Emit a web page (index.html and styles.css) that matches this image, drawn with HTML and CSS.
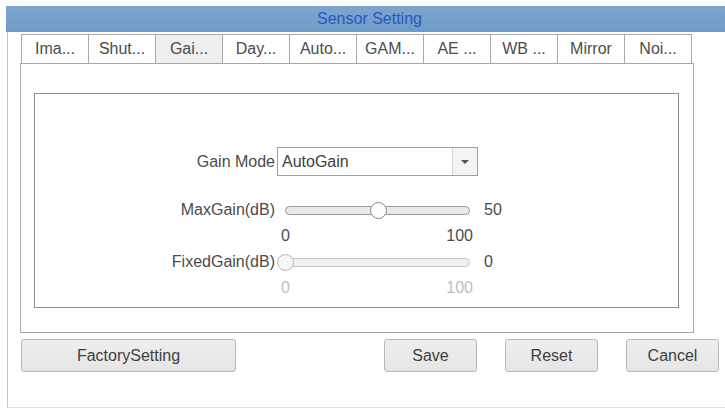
FILE: index.html
```html
<!DOCTYPE html>
<html lang="en">
<head>
<meta charset="utf-8">
<title>Sensor Setting</title>
<link rel="stylesheet" href="styles.css">
</head>
<body>
<div class="window">
  <div class="titlebar"><span class="title">Sensor Setting</span></div>
  <div class="frame">
    <div class="tabs">
      <div class="tab">Ima...</div>
      <div class="tab">Shut...</div>
      <div class="tab active">Gai...</div>
      <div class="tab">Day...</div>
      <div class="tab">Auto...</div>
      <div class="tab">GAM...</div>
      <div class="tab">AE ...</div>
      <div class="tab">WB ...</div>
      <div class="tab">Mirror</div>
      <div class="tab last">Noi...</div>
    </div>
    <div class="panel">
      <div class="group">
        <div class="form">
          <div class="label row-mode">Gain Mode</div>
          <div class="combo row-mode">
            <span class="combo-text">AutoGain</span>
            <span class="combo-btn"><span class="caret"></span></span>
          </div>
          <div class="row-mode"></div>

          <div class="label">MaxGain(dB)</div>
          <div class="slider">
            <div class="track"></div>
            <div class="thumb" style="left: 50%"></div>
          </div>
          <div class="value">50</div>

          <div></div>
          <div class="scale"><span>0</span><span>100</span></div>
          <div></div>

          <div class="label">FixedGain(dB)</div>
          <div class="slider disabled">
            <div class="track"></div>
            <div class="thumb" style="left: 0%"></div>
          </div>
          <div class="value">0</div>

          <div></div>
          <div class="scale disabled"><span>0</span><span>100</span></div>
          <div></div>
        </div>
      </div>
    </div>
    <div class="actions">
      <button class="btn wide">FactorySetting</button>
      <div class="btn-group">
        <button class="btn">Save</button>
        <button class="btn">Reset</button>
        <button class="btn">Cancel</button>
      </div>
    </div>
  </div>
</div>
</body>
</html>
```

FILE: styles.css
```css
html, body {
  margin: 0;
  padding: 0;
  background: #ffffff;
}

body {
  font-family: "Liberation Sans", Arial, sans-serif;
  font-size: 16px;
  color: #4c4c4c;
  overflow: hidden;
}

.window {
  margin: 6px 0 0 6px;
  width: 719px;
}

/* caption bar */
.titlebar {
  height: 26px;
  display: flex;
  align-items: center;
  justify-content: center;
  padding-left: 8px;
  background: linear-gradient(#7ea6d1, #6f9ac8);
}

.title {
  color: #2a58bd;
  font-size: 16px;
}

/* dialog body */
.frame {
  margin-left: 1px;
  border-left: 1px solid #c6c6c6;
  border-bottom: 1px solid #e0e0e0;
  height: 373px;
  padding: 2px 0 0 12px;
}

/* tab strip */
.tabs {
  display: flex;
  margin-left: 1px;
}

.tab {
  width: 67px;
  height: 29px;
  box-sizing: border-box;
  border-top: 1px solid #a8a8a8;
  border-left: 1px solid #a8a8a8;
  display: flex;
  align-items: center;
  justify-content: center;
  background: #ffffff;
}

.tab.last {
  border-right: 1px solid #a8a8a8;
  width: 68px;
}

.tab.active {
  background: #efefef;
}

.panel {
  box-sizing: border-box;
  width: 674px;
  height: 270px;
  border: 1px solid #a8a8a8;
  padding: 29px 14px 0 13px;
}

.group {
  box-sizing: border-box;
  height: 215px;
  border: 1px solid #8e8e8e;
}

/* form grid: label | control | value */
.form {
  display: grid;
  grid-template-columns: 240px 201px auto;
  grid-template-rows: 50px 26px 26px 26px 26px;
  column-gap: 2px;
  align-items: center;
  padding-top: 53px;
}

.row-mode {
  margin-bottom: 21px;
}

.label {
  text-align: right;
  white-space: nowrap;
}

.combo {
  box-sizing: border-box;
  height: 29px;
  border: 1px solid #a0a0a0;
  display: flex;
  align-items: center;
  background: #ffffff;
}

.combo-text {
  flex: 1;
  padding-left: 4px;
  color: #404040;
}

.combo-btn {
  width: 24px;
  align-self: stretch;
  border-left: 1px solid #d4d4d4;
  background: #f4f4f4;
  display: flex;
  align-items: center;
  justify-content: center;
}

.caret {
  width: 0;
  height: 0;
  border-left: 4px solid transparent;
  border-right: 4px solid transparent;
  border-top: 4px solid #555;
}

/* sliders */
.slider {
  position: relative;
  height: 17px;
  margin: 0 8px;
  display: flex;
  align-items: center;
}

.track {
  flex: 1;
  height: 9px;
  box-sizing: border-box;
  border: 1px solid #9a9a9a;
  border-radius: 5px;
  background: #e9e9e9;
}

.thumb {
  position: absolute;
  top: 0;
  width: 17px;
  height: 17px;
  margin-left: -8px;
  box-sizing: border-box;
  border: 1px solid #8a8a8a;
  border-radius: 50%;
  background: #fdfdfd;
}

.slider.disabled .track {
  border-color: #c4c4c4;
  background: #f1f1f1;
}

.slider.disabled .thumb {
  border-color: #b4b4b4;
  background: #f6f6f6;
}

.value {
  padding-left: 4px;
}

.scale {
  display: flex;
  justify-content: space-between;
  padding: 0 5px 0 4px;
}

.scale.disabled {
  color: #bdbdbd;
}

/* bottom buttons */
.actions {
  display: flex;
  width: 698px;
  margin-top: 6px;
  padding-left: 1px;
}

.btn-group {
  margin-left: auto;
  display: flex;
  gap: 28px;
}

.btn {
  box-sizing: border-box;
  width: 93px;
  height: 33px;
  border: 1px solid #b7b7b7;
  border-radius: 3px;
  background: linear-gradient(#eeeeee, #e6e6e6);
  font-family: "Liberation Sans", Arial, sans-serif;
  font-size: 16px;
  color: #404040;
  padding: 0;
}

.btn.wide {
  width: 215px;
}
```
